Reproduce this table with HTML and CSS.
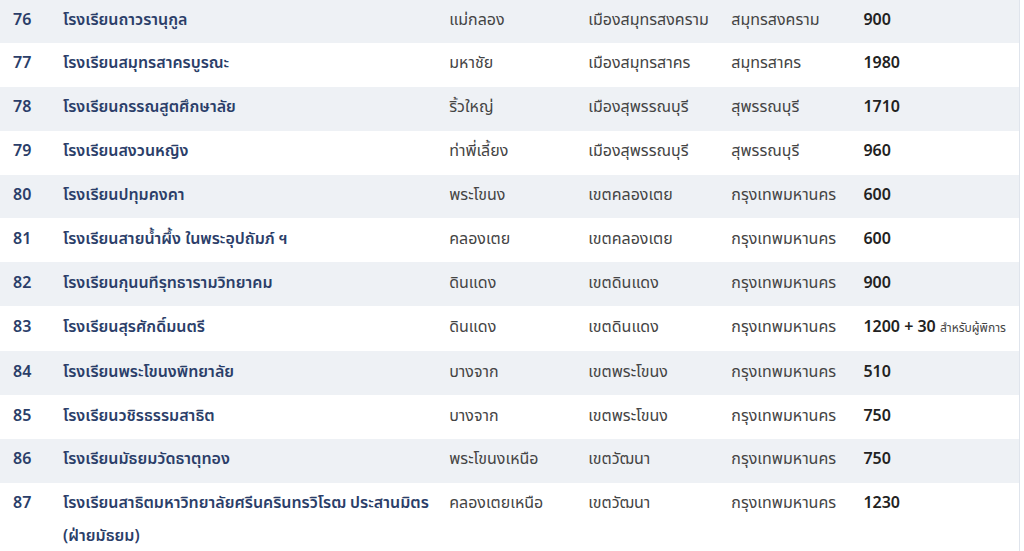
FILE: index.html
```html
<!DOCTYPE html>
<html lang="th">
<head>
<meta charset="utf-8">
<title>รายชื่อโรงเรียน</title>
<link rel="stylesheet" href="styles.css">
</head>
<body>
<table class="schools">
  <colgroup>
    <col class="c-no"><col class="c-name"><col class="c-amp"><col class="c-khet"><col class="c-prov"><col class="c-num">
  </colgroup>
  <tbody>
    <tr><td class="no">76</td><td class="name">โรงเรียนถาวรานุกูล</td><td>แม่กลอง</td><td>เมืองสมุทรสงคราม</td><td>สมุทรสงคราม</td><td class="num">900</td></tr>
    <tr><td class="no">77</td><td class="name">โรงเรียนสมุทรสาครบูรณะ</td><td>มหาชัย</td><td>เมืองสมุทรสาคร</td><td>สมุทรสาคร</td><td class="num">1980</td></tr>
    <tr><td class="no">78</td><td class="name">โรงเรียนกรรณสูตศึกษาลัย</td><td>ริ้วใหญ่</td><td>เมืองสุพรรณบุรี</td><td>สุพรรณบุรี</td><td class="num">1710</td></tr>
    <tr><td class="no">79</td><td class="name">โรงเรียนสงวนหญิง</td><td>ท่าพี่เลี้ยง</td><td>เมืองสุพรรณบุรี</td><td>สุพรรณบุรี</td><td class="num">960</td></tr>
    <tr><td class="no">80</td><td class="name">โรงเรียนปทุมคงคา</td><td>พระโขนง</td><td>เขตคลองเตย</td><td>กรุงเทพมหานคร</td><td class="num">600</td></tr>
    <tr><td class="no">81</td><td class="name">โรงเรียนสายน้ำผึ้ง ในพระอุปถัมภ์ ฯ</td><td>คลองเตย</td><td>เขตคลองเตย</td><td>กรุงเทพมหานคร</td><td class="num">600</td></tr>
    <tr><td class="no">82</td><td class="name">โรงเรียนกุนนทีรุทธารามวิทยาคม</td><td>ดินแดง</td><td>เขตดินแดง</td><td>กรุงเทพมหานคร</td><td class="num">900</td></tr>
    <tr><td class="no">83</td><td class="name">โรงเรียนสุรศักดิ์มนตรี</td><td>ดินแดง</td><td>เขตดินแดง</td><td>กรุงเทพมหานคร</td><td class="num">1200 + 30 <span class="note">สำหรับผู้พิการ</span></td></tr>
    <tr><td class="no">84</td><td class="name">โรงเรียนพระโขนงพิทยาลัย</td><td>บางจาก</td><td>เขตพระโขนง</td><td>กรุงเทพมหานคร</td><td class="num">510</td></tr>
    <tr><td class="no">85</td><td class="name">โรงเรียนวชิรธรรมสาธิต</td><td>บางจาก</td><td>เขตพระโขนง</td><td>กรุงเทพมหานคร</td><td class="num">750</td></tr>
    <tr><td class="no">86</td><td class="name">โรงเรียนมัธยมวัดธาตุทอง</td><td>พระโขนงเหนือ</td><td>เขตวัฒนา</td><td>กรุงเทพมหานคร</td><td class="num">750</td></tr>
    <tr><td class="no">87</td><td class="name">โรงเรียนสาธิตมหาวิทยาลัยศรีนครินทรวิโรฒ ประสานมิตร<br>(ฝ่ายมัธยม)</td><td>คลองเตยเหนือ</td><td>เขตวัฒนา</td><td>กรุงเทพมหานคร</td><td class="num">1230</td></tr>
  </tbody>
</table>
</body>
</html>
```

FILE: styles.css
```css
html, body {
  margin: 0;
  padding: 0;
  background: #ffffff;
}

body {
  font-family: "Noto Sans Thai", "Noto Sans", "Liberation Sans", sans-serif;
  font-size: 16px;
  color: #444444;
}

.schools {
  width: 1020px;
  margin-top: -2px;
  border-collapse: collapse;
  table-layout: fixed;
  border-right: 1px solid #dfe4ec;
  border-top: 1px solid #dcdfe5;
}

.c-no { width: 50px; }
.c-name { width: 386px; }
.c-amp { width: 139px; }
.c-khet { width: 143px; }
.c-prov { width: 132px; }
.c-num { width: 169px; }

.schools td {
  padding: 4.5px 4px 6.4px 13px;
  line-height: 33px;
  vertical-align: top;
  white-space: nowrap;
}

.schools tr:nth-child(odd) td {
  background: #eef1f5;
}

.schools td.no,
.schools td.name {
  color: #2b3e69;
  font-weight: 560;
}

.schools td.num {
  color: #222222;
  font-weight: 600;
}

.note {
  font-size: 12px;
  font-weight: 400;
  color: #444444;
}
```
